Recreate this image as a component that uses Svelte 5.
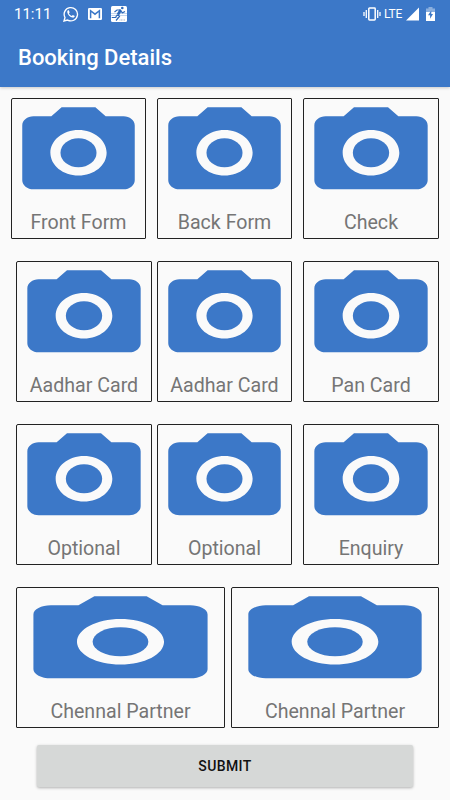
<script lang="ts">
	const rows = [
		['Front Form', 'Back Form', 'Check'],
		['Aadhar Card', 'Aadhar Card', 'Pan Card'],
		['Optional', 'Optional', 'Enquiry'],
		['Chennal Partner', 'Chennal Partner']
	];
</script>

<main>
	<header>
		<div class="status-bar">
			<span class="time">11:11</span>
			<svg class="whatsapp" viewBox="0 0 24 24">
				<path d="M1.5 22.5 L3 17.2 A10 10 0 1 1 6.9 21.1 Z" fill="none" stroke="white" stroke-width="2" />
				<path d="M8 6.500c-1 .2-1.800 1.300-1.600 2.800.5 3.700 4.200 7.300 8 8.100 1.700.3 3.300-.8 3.300-2.300l-3-1.600-1.500 1.600c-2-.8-3.500-2.200-4.400-4.100l1.200-1.400L8.800 6.500z" fill="white" />
			</svg>
			<svg class="mail" viewBox="0 0 14 12">
				<rect width="14" height="12" rx="1.3" fill="white" />
				<path d="M2.600 10.300V2.700L7 6.200l4.400-3.500v7.600" fill="none" stroke="#3c78c8" stroke-width="1.500" />
			</svg>
			<svg class="runner" viewBox="0 0 16 16">
				<rect width="16" height="16" rx="1.5" fill="white" />
				<path d="M0 7.500h16M0 9.500h16M0 11.500h7" stroke="#9bbce5" stroke-width=".6" />
				<circle cx="11.300" cy="2" r="1.300" fill="#2e69b8" />
				<path d="M9.700 4 7 8.500" stroke="#2e69b8" stroke-width="2.700" />
				<path d="M7 8.500 8.500 10.500 5 14.500M6.500 8.500 4.500 11.500H1M10 4H6L3.500 6M9.500 5l2 1.800 2.500-1.300" fill="none" stroke="#2e69b8" stroke-width="1.200" />
				<path d="M8.500 14h6" stroke="#c3cedd" stroke-width="1.300" stroke-dasharray="1 .5" />
			</svg>
			<svg class="vibrate" viewBox="0 0 18 14">
				<rect x="5.800" y="1" width="6.400" height="12" rx=".7" fill="none" stroke="white" stroke-width="1.500" />
				<path d="M3.300 3v8M14.700 3v8M1 5v4M17 5v4" stroke="white" stroke-width="1.300" />
			</svg>
			<span class="network">LTE</span>
			<svg class="signal" viewBox="0 0 14 14">
				<path d="M0 14 14 0V14z" fill="white" />
			</svg>
			<svg class="battery" viewBox="0 0 9 14">
				<path d="M0 1.500H2.500V0H6.500V1.500H9V5H0z" fill="#8bafde" />
				<path d="M0 5H9V14H0z" fill="white" />
				<path d="M5.300 3.500 2 8.300H4.100V11.700L7 7H5.300z" fill="#3c78c8" />
			</svg>
		</div>
		<h1>Booking Details</h1>
	</header>

	<div class="content">
		{#each rows as row, i}
			<div class="row" class:first={i === 0} class:wide={row.length === 2}>
				{#each row as label}
					<div class="card">
						<svg class="camera" viewBox="0 0 24 24" preserveAspectRatio="none">
							<circle cx="12" cy="12" r="3.200" />
							<path d="M9 2 7.170 4H4c-1.100 0-2 .9-2 2v12c0 1.100.9 2 2 2h16c1.100 0 2-.9 2-2V6c0-1.100-.9-2-2-2h-3.170L15 2H9zm3 15c-2.760 0-5-2.240-5-5s2.240-5 5-5 5 2.240 5 5-2.240 5-5 5z" />
						</svg>
						<span>{label}</span>
					</div>
				{/each}
			</div>
		{/each}

		<button>SUBMIT</button>
	</div>
</main>

<style>
	:global(body) {
		margin: 0;
		background: #fafafa;
	}

	main {
		width: 450px;
		height: 800px;
		overflow: hidden;
		background: #fafafa;
		font-family: Roboto, sans-serif;
	}

	header {
		height: 87px;
		background: #3c78c8;
		color: white;
		box-shadow: 0 1px 3px rgba(0, 0, 0, 0.2);
	}

	.status-bar {
		display: flex;
		align-items: center;
		height: 27px;
		padding: 0 15px 0 14px;
	}

	.time {
		width: 49px;
		font-size: 15px;
	}

	.whatsapp {
		width: 16px;
		height: 16px;
	}

	.mail {
		width: 14px;
		height: 12px;
		margin-left: 9px;
	}

	.runner {
		width: 16px;
		height: 16px;
		margin-left: 9px;
	}

	.vibrate {
		width: 18px;
		height: 14px;
		margin-left: auto;
	}

	.network {
		width: 19px;
		margin: 0 3px;
		font-size: 12px;
		line-height: 14px;
		letter-spacing: -0.3px;
	}

	.signal {
		width: 13px;
		height: 14px;
	}

	.battery {
		width: 9px;
		height: 14px;
		margin-left: 7px;
	}

	h1 {
		margin: 0;
		padding: 17px 0 0 18px;
		font-size: 22px;
		font-weight: 500;
		line-height: 28px;
	}

	.content {
		display: flex;
		flex-direction: column;
		padding: 11px 11px 0;
	}

	.row {
		display: grid;
		grid-template-columns: 136px 135px 136px;
		column-gap: 5px;
		height: 141px;
		margin-bottom: 22px;
		padding-left: 5px;
	}

	.row .card:nth-child(3) {
		margin-left: 6px;
		margin-right: -6px;
	}

	.row.first {
		grid-template-columns: 135px 135px 136px;
		column-gap: 11px;
		padding-left: 0;
	}

	.row.first .card:nth-child(3) {
		margin: 0;
	}

	.row.wide {
		grid-template-columns: 209px 208px;
		column-gap: 6px;
		margin-bottom: 17px;
	}

	.card {
		box-sizing: border-box;
		border: 1px solid #222;
		border-radius: 2px 1px 1px 1px;
		text-align: center;
	}

	.camera {
		display: block;
		width: calc(100% + 2px);
		height: 109.5px;
		margin: -1px;
		fill: #3c78c8;
	}

	.card span {
		display: block;
		margin-top: 4.5px;
		font-size: 19.6px;
		line-height: 24px;
		color: #757575;
		white-space: nowrap;
	}

	button {
		width: 376px;
		height: 42px;
		margin-left: 26px;
		padding: 0;
		border: none;
		border-radius: 2px;
		background: #d6d8d7;
		box-shadow: 0 1px 3px rgba(0, 0, 0, 0.3);
		color: #111;
		font-family: inherit;
		font-size: 14px;
		font-weight: 500;
		letter-spacing: 0.4px;
	}
</style>
